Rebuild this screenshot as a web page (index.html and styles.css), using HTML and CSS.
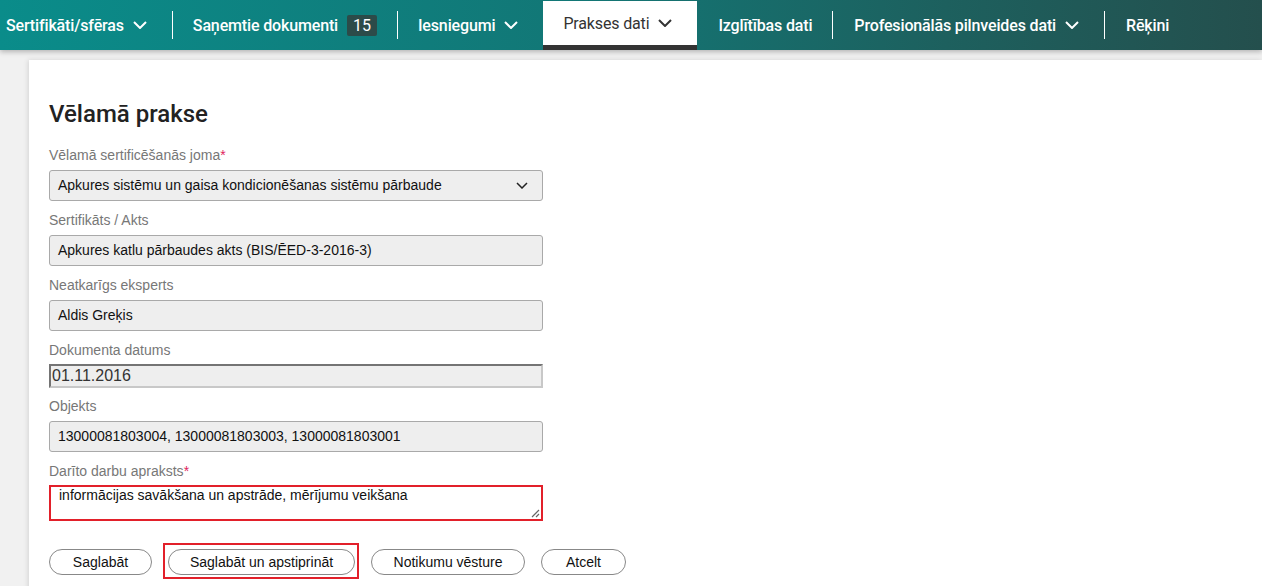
FILE: index.html
```html
<!DOCTYPE html>
<html lang="lv">

<head>
    <meta charset="UTF-8">
    <meta name="viewport" content="width=device-width, initial-scale=1.0">
    <title>Prakses dati</title>
    <link rel="stylesheet" href="styles.css">
</head>

<body>
    <nav class="topnav">
        <a class="nav-item first">Sertifikāti/sfēras
            <svg class="chev" viewBox="0 0 14 8"><path d="M1 1l6 6 6-6" /></svg>
        </a>
        <span class="sep"></span>
        <a class="nav-item">Saņemtie dokumenti<span class="badge">15</span></a>
        <span class="sep"></span>
        <a class="nav-item">Iesniegumi
            <svg class="chev" viewBox="0 0 14 8"><path d="M1 1l6 6 6-6" /></svg>
        </a>
        <a class="nav-item active">Prakses dati
            <svg class="chev" viewBox="0 0 14 8"><path d="M1 1l6 6 6-6" /></svg>
        </a>
        <a class="nav-item roomy">Izglītības dati</a>
        <span class="sep"></span>
        <a class="nav-item roomy">Profesionālās pilnveides dati
            <svg class="chev" viewBox="0 0 14 8"><path d="M1 1l6 6 6-6" /></svg>
        </a>
        <span class="sep"></span>
        <a class="nav-item roomy">Rēķini</a>
    </nav>

    <main class="card">
        <h1 class="title">Vēlamā prakse</h1>

        <div class="field">
            <label>Vēlamā sertificēšanās joma<span class="req">*</span></label>
            <div class="select">
                <span>Apkures sistēmu un gaisa kondicionēšanas sistēmu pārbaude</span>
                <svg class="select-chev" viewBox="0 0 12 7"><path d="M1 1l5 5 5-5" /></svg>
            </div>
        </div>

        <div class="field">
            <label>Sertifikāts / Akts</label>
            <div class="input">Apkures katlu pārbaudes akts (BIS/ĒED-3-2016-3)</div>
        </div>

        <div class="field">
            <label>Neatkarīgs eksperts</label>
            <div class="input">Aldis Greķis</div>
        </div>

        <div class="field field-date">
            <label>Dokumenta datums</label>
            <div class="input date">01.11.2016</div>
        </div>

        <div class="field">
            <label>Objekts</label>
            <div class="input">13000081803004, 13000081803003, 13000081803001</div>
        </div>

        <div class="field field-text">
            <label>Darīto darbu apraksts<span class="req">*</span></label>
            <div class="textarea">informācijas savākšana un apstrāde, mērījumu veikšana
                <svg class="grip" viewBox="0 0 10 10"><path d="M9 2L2 9M9 6L6 9" /></svg>
            </div>
        </div>

        <div class="actions">
            <button class="btn btn-save">Saglabāt</button>
            <span class="error-box"><button class="btn btn-confirm">Saglabāt un apstiprināt</button></span>
            <button class="btn btn-history">Notikumu vēsture</button>
            <button class="btn btn-cancel">Atcelt</button>
        </div>
    </main>
</body>

</html>
```

FILE: styles.css
```css
body {
    margin: 0;
    background-color: #f1f1f1;
    font-family: "Liberation Sans", Arial, sans-serif;
    height: 586px;
    overflow: hidden;
}

.topnav {
    display: flex;
    align-items: center;
    height: 50px;
    background: linear-gradient(90deg, #0a8c8a 0%, #127776 45%, #1d605e 75%, #244f4d 100%);
    box-shadow: 0 2px 5px rgba(0, 0, 0, 0.25);
    position: relative;
    z-index: 2;
}

.nav-item {
    display: flex;
    align-items: center;
    height: 50px;
    box-sizing: border-box;
    padding: 0 20px;
    color: #fff;
    font-family: Roboto, sans-serif;
    font-size: 16px;
    font-weight: 500;
    letter-spacing: -0.15px;
    white-space: nowrap;
    cursor: pointer;
}

.nav-item.first {
    padding-left: 6px;
}

.nav-item.roomy {
    padding: 0 20px 0 21px;
}

.chev {
    width: 14px;
    height: 8px;
    margin-left: 9px;
    margin-right: 5px;
    fill: none;
    stroke: currentColor;
    stroke-width: 2;
}

.sep {
    width: 1px;
    height: 28px;
    background-color: #fff;
}

.badge {
    display: inline-block;
    margin-left: 9px;
    padding: 0 6px;
    height: 21px;
    line-height: 21px;
    background-color: #2c4b49;
    border-radius: 2px;
    font-weight: 400;
    letter-spacing: 0;
}

.nav-item.active {
    background-color: #fff;
    color: #333;
    font-weight: 400;
    height: 49px;
    margin-top: 1px;
    border-bottom: 5px solid #333;
}

.card {
    margin: 10px 0 0 29px;
    background-color: #fff;
    box-shadow: -1px 0 5px rgba(0, 0, 0, 0.12);
    padding: 40px 20px 0;
    height: 600px;
}

.title {
    margin: 0 0 19px;
    font-family: Roboto, sans-serif;
    font-size: 24px;
    font-weight: 500;
    line-height: 28px;
    color: #222;
}

.field {
    width: 494px;
    margin-bottom: 11px;
}

.field label {
    display: block;
    font-size: 14px;
    line-height: 17px;
    color: #777;
    margin-bottom: 6px;
}

.field-date {
    margin-bottom: 10px;
}

.field-date label,
.field-text label {
    margin-bottom: 5px;
}

.req {
    color: #e0245e;
}

.input,
.select {
    box-sizing: border-box;
    height: 31px;
    padding: 0 8px;
    background-color: #eee;
    border: 1px solid #a9a9a9;
    border-radius: 3px;
    font-size: 14px;
    line-height: 29px;
    color: #111;
}

.select {
    display: flex;
    justify-content: space-between;
    align-items: center;
}

.select-chev {
    width: 12px;
    height: 7px;
    margin-right: 6px;
    fill: none;
    stroke: #222;
    stroke-width: 1.5;
}

.input.date {
    height: 24px;
    line-height: 20px;
    padding: 0 1px;
    border: 2px inset #c8c8c8;
    border-radius: 0;
    font-size: 16px;
    color: #333;
}

.textarea {
    position: relative;
    box-sizing: border-box;
    height: 36px;
    padding: 0 8px;
    border: 2px solid #e2202a;
    font-size: 14px;
    line-height: 16px;
    color: #111;
}

.grip {
    position: absolute;
    right: 1px;
    bottom: 1px;
    width: 10px;
    height: 10px;
    fill: none;
    stroke: #666;
    stroke-width: 1.2;
}

.actions {
    display: flex;
    align-items: flex-start;
    gap: 16px;
    margin-top: 22px;
}

.btn {
    box-sizing: border-box;
    height: 26px;
    margin-top: 6px;
    padding: 0;
    background-color: #fff;
    border: 1px solid #888;
    border-radius: 13px;
    font-family: "Liberation Sans", Arial, sans-serif;
    font-size: 14px;
    color: #111;
    white-space: nowrap;
    cursor: pointer;
}

.btn-save {
    width: 103px;
}

.error-box {
    display: flex;
    padding: 4px 2px 2px 3px;
    margin: 0 -4px 0 -5px;
    border: 2px solid #e2202a;
}

.error-box .btn {
    margin-top: 0;
}

.btn-confirm {
    width: 187px;
}

.btn-history {
    width: 154px;
}

.btn-cancel {
    width: 85px;
}
```
